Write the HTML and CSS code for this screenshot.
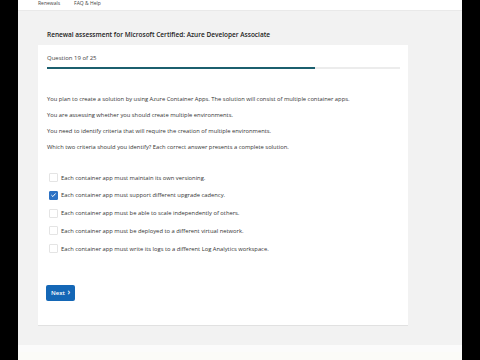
FILE: index.html
```html
<!DOCTYPE html>
<html lang="en">
<head>
  <meta charset="UTF-8" />
  <title>Renewal assessment</title>
  <link rel="stylesheet" href="styles.css">
</head>
<body>
  <div class="screen">
    <div class="topbar">
      <span>Renewals</span>
      <span>FAQ &amp; Help</span>
    </div>

    <h1 class="title">Renewal assessment for Microsoft Certified: Azure Developer Associate</h1>

    <div class="card">
      <div class="question-head">Question 19 of 25</div>
      <div class="progress"><div class="progress-fill" style="width: 76%"></div></div>

      <div class="prompt">
        <p>You plan to create a solution by using Azure Container Apps. The solution will consist of multiple container apps.</p>
        <p>You are assessing whether you should create multiple environments.</p>
        <p>You need to identify criteria that will require the creation of multiple environments.</p>
        <p>Which two criteria should you identify? Each correct answer presents a complete solution.</p>
      </div>

      <div class="options">
        <label class="option"><span class="box"></span>Each container app must maintain its own versioning.</label>
        <label class="option"><span class="box checked"><svg viewBox="0 0 10 10" width="8" height="8"><path d="M2 5.2 L4.1 7.2 L8 2.8" fill="none" stroke="#fff" stroke-width="1.4"/></svg></span>Each container app must support different upgrade cadency.</label>
        <label class="option"><span class="box"></span>Each container app must be able to scale independently of others.</label>
        <label class="option"><span class="box"></span>Each container app must be deployed to a different virtual network.</label>
        <label class="option"><span class="box"></span>Each container app must write its logs to a different Log Analytics workspace.</label>
      </div>

      <button class="next">Next <span class="chev">&#8250;</span></button>
    </div>

    <div class="footer"></div>
  </div>
</body>
</html>
```

FILE: styles.css
```css
body {
  margin: 0;
  background: #000;
  font-family: "Open Sans", "Noto Sans", Arial, sans-serif;
  color: #323130;
}
.screen {
  width: 444px;
  height: 360px;
  margin: 0 auto;
  background: #f2f2f2;
  overflow: hidden;
  display: flex;
  flex-direction: column;
}
.topbar {
  height: 10px;
  background: #fff;
  border-bottom: 1px solid #e9e9e9;
  font-size: 5px;
  line-height: 6px;
  padding-left: 20px;
  display: flex;
  gap: 14px;
  align-items: flex-start;
  overflow: hidden;
  color: #444;
}
.title {
  font-size: 6.5px;
  font-weight: 600;
  margin: 19px 0 0 29px;
  line-height: 9px;
  color: #222;
}
.card {
  margin: 6px 0 0 20px;
  width: 370px;
  height: 281px;
  box-sizing: border-box;
  background: #fff;
  border-bottom: 1px solid #e1e1e1;
  padding: 9px 8px 0 9px;
}
.question-head {
  font-size: 6px;
  line-height: 8px;
  color: #444;
}
.progress {
  margin-top: 5px;
  height: 2px;
  width: 353px;
  background: #ececec;
}
.progress-fill {
  height: 100%;
  background: #1b5f6e;
}
.prompt {
  margin-top: 26px;
}
.prompt p {
  font-size: 5.8px;
  line-height: 8px;
  margin: 0 0 8px;
  color: #333;
}
.options {
  margin-top: 22px;
  display: flex;
  flex-direction: column;
  gap: 8.75px;
}
.option {
  display: flex;
  align-items: center;
  gap: 3px;
  font-size: 5.8px;
  line-height: 8px;
  color: #333;
}
.box {
  width: 7px;
  height: 7px;
  margin-left: 2px;
  border: 1px solid #e4e4e4;
  border-radius: 1px;
  background: #fff;
  display: flex;
  align-items: center;
  justify-content: center;
}
.box.checked {
  background: #2d72c4;
  border-color: #2d72c4;
}
.next {
  margin-top: 32px;
  margin-left: -1px;
  font-family: inherit;
  font-size: 6px;
  font-weight: 600;
  color: #fff;
  background: #1467b6;
  border: none;
  border-radius: 2px;
  padding: 3px 5px 4px;
  line-height: 8px;
}
.chev {
  font-size: 8px;
  margin-left: 1px;
}
.footer {
  margin-top: auto;
  height: 15px;
  background: #fbfbf8;
  border-top: 7px solid #fbfbfb;
  box-sizing: border-box;
}
```
